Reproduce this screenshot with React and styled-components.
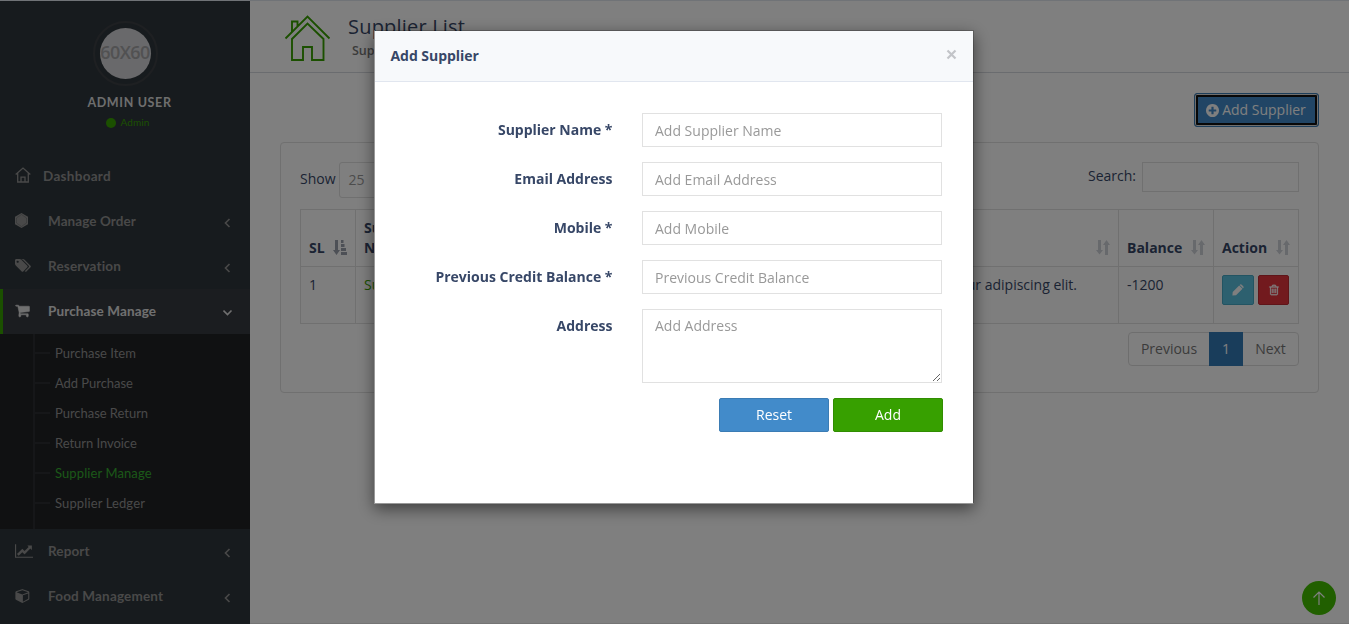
import React from 'react';
import styled, { createGlobalStyle } from 'styled-components';

const Global = createGlobalStyle`
  * { box-sizing: border-box; }
  html, body { margin: 0; height: 624px; overflow: hidden; }
  body { font: 14px/20px "Open Sans", sans-serif; color: #374767; background: #fff; }
  button, input, textarea { font: inherit; }
`;

const Page = styled.div`display: flex; height: 624px; border-top: 1px solid #e1e6ef; border-bottom: 1px solid #e8e8e8;`;
const Sidebar = styled.aside`width: 250px; flex: none; background: #2f373c; font-family: Lato, sans-serif; overflow: hidden; margin-bottom: -1px;`;
const UserPanel = styled.div`height: 153px; padding-top: 20px; display: flex; flex-direction: column; align-items: center;`;
const Avatar = styled.div`
  width: 65px; height: 65px; border: 2px solid #3d4045; border-radius: 50%; padding: 5px;
`;
const AvatarFace = styled.div`
  width: 51px; height: 51px; border-radius: 50%; background: #d2d2d6; color: #a3a3a5; overflow: hidden; padding-bottom: 3px;
  display: flex; align-items: center; justify-content: center; font: 600 18px "Open Sans", sans-serif; letter-spacing: -.6px; white-space: nowrap;
`;
const UserName = styled.div`margin: 7px 0 0 9px; line-height: 20px; font-weight: 700; font-size: 12.5px; letter-spacing: .65px; color: #dcdcdc;`;
const UserRole = styled.div`display: flex; align-items: center; gap: 5px; margin-left: 5px; line-height: 19px; font-size: 10px; color: #37a000; letter-spacing: .1px;`;
const Dot = styled.i`width: 10px; height: 10px; border-radius: 50%; background: #37a000;`;

const MenuRow = styled.a`
  height: 45px; display: flex; align-items: center; padding: 0 17px 2px ${p => (p.$active ? 12 : 15)}px;
  border-left: ${p => (p.$active ? '3px solid #37a000' : '0')};
  background: ${p => (p.$active ? '#373a40' : 'transparent')};
  color: ${p => (p.$active ? '#e0e0e0' : '#929292')};
  font-weight: 700; font-size: 13.5px; letter-spacing: ${p => p.$ls ?? 0.12}px;
  > svg:first-child { flex: none; margin-right: ${p => p.$gap || 15}px; }
`;
const RowLabel = styled.span`flex: 1; white-space: nowrap;`;
const SubMenu = styled.div`height: 195px; background: #202225; padding-left: 33px;`;
const SubTrack = styled.div`border-left: 2px solid #2c2f33; height: 195px; padding-top: 4px;`;
const SubItem = styled.a`
  display: flex; align-items: center; height: 30px; gap: 5px; font-size: 13px; letter-spacing: ${p => p.$ls || 0}px;
  color: ${p => (p.$active ? '#37b030' : '#929292')};
  &::before { content: ''; width: 15px; height: 2px; background: #2c2f33; }
`;

const Main = styled.main`flex: 1; min-width: 0;`;
const ContentHeader = styled.header`
  height: 72px; border-bottom: 1px solid #d5d8de; display: flex; padding: 13px 0 0 34px;
`;
const Titles = styled.div`margin: 2px 0 0 17px;`;
const Title = styled.h1`margin: 0; font-size: 20px; line-height: 22px; font-weight: 500; letter-spacing: .2px;`;
const Subtitle = styled.div`margin: 3px 0 0 4px; font-size: 12.5px; line-height: 20px; font-weight: 600; color: #777;`;
const Content = styled.section`padding: 20px 30px 0;`;
const Actions = styled.div`display: flex; justify-content: flex-end; margin-bottom: 15px;`;
const AddSupplier = styled.button`
  width: 125px; height: 34px; padding: 0 1px 0 0; display: flex; align-items: center; justify-content: center; gap: 3px;
  background: #428bca; border: 1px solid #3b7cb4; color: #fff; border-radius: 3px;
  box-shadow: inset 0 0 0 1px #ddd, inset 0 0 0 3px #101010;
`;
const Panel = styled.div`height: 251px; border: 1px solid #e0e0e0; border-radius: 4px; padding: 19px;`;
const Filters = styled.div`display: flex; justify-content: space-between; height: 47px; white-space: nowrap;`;
const Filter = styled.label`display: flex; align-items: flex-start; gap: ${p => p.$gap}px; > span { padding-top: ${p => p.$top}px; }`;
const FakeSelect = styled.div`width: 75px; height: 36px; border: 1px solid #e0e0e0; border-radius: 3px; padding: 7px 9px; color: #999;`;
const SearchInput = styled.input`width: 157px; height: 30px; border: 1px solid #e0e0e0; background: transparent;`;
const Table = styled.table`
  width: 999px; table-layout: fixed; border-collapse: collapse;
  th, td { border: 1px solid #e0e0e0; padding: 8px; text-align: left; height: 57px; }
  th { vertical-align: bottom; font-weight: 700; }
  td { vertical-align: top; background: #fdfdfd; white-space: nowrap; }
`;
const Col = styled.col`width: ${p => p.$w}px;`;
const HeadCell = styled.div`display: flex; align-items: flex-end; justify-content: space-between; > svg { margin-bottom: 3px; flex: none; }`;
const Link = styled.a`color: #37a000;`;
const Right = styled.div`text-align: right; padding-right: 33px;`;
const Buttons = styled.div`display: flex; gap: 4px;`;
const IconButton = styled.button`
  width: ${p => p.$w}px; height: 30px; padding: 0; display: flex; align-items: center; justify-content: center; color: #fff;
  background: ${p => p.$bg}; border: 1px solid ${p => p.$edge}; border-radius: 2px;
`;
const Pagination = styled.div`display: flex; width: 171px; height: 34px; margin: 8px 0 0 auto; border: 1px solid #ddd; border-radius: 4px; color: #777;`;
const PageLink = styled.a`
  width: ${p => p.$w}px; display: flex; align-items: center; justify-content: center;
  ${p => p.$on && 'background: #337ab7; color: #fff; margin: -1px 0;'}
`;
const ToTop = styled.div`
  position: fixed; left: 1302px; top: 581px; width: 34px; height: 34px; border-radius: 50%; background: #42bf00;
  display: flex; align-items: center; justify-content: center;
`;

const Backdrop = styled.div`position: fixed; inset: 0; background: rgba(0,0,0,.5); display: flex; justify-content: center; align-items: flex-start; padding: 30px 1px 0 0;`;
const Modal = styled.div`
  width: 600px; height: 474px; background: #fff; background-clip: padding-box; border: 1px solid rgba(0,0,0,.2);
  border-left-color: #999; border-bottom-color: #999; box-shadow: 0 5px 15px rgba(0,0,0,.5);
`;
const ModalHeader = styled.div`
  height: 51px; background: #f7f9fb; border-bottom: 1px solid #e1e6ef; display: flex; align-items: center; justify-content: space-between;
  padding: 0 16px 0 15.5px; font-weight: 700; letter-spacing: -.05px; > svg { margin-bottom: 3px; }
`;
const Form = styled.form`padding: 31px 31px 0 0; display: flex; flex-direction: column; gap: 15px;`;
const Field = styled.div`display: flex; justify-content: flex-end; gap: 29.5px;`;
const Label = styled.label`font-weight: 700; padding-top: 7px; white-space: nowrap;`;
const fieldCss = `
  display: block; width: 300px; border: 1px solid #e1e1e1; border-radius: 0; padding: 6px 12px; margin: 0; outline: 0; background: #fff;
  &::placeholder { color: #999; opacity: 1; }
`;
const Input = styled.input`${fieldCss} height: 34px;`;
const TextArea = styled.textarea`${fieldCss} height: 74px;`;
const FormActions = styled.div`display: flex; gap: 4px; justify-content: flex-end; margin-right: -1px;`;
const FormButton = styled.button`
  width: 110px; height: 34px; padding: 0; color: #fff; border-radius: 2px;
  background: ${p => (p.$ok ? '#37a000' : '#428bca')}; border: 1px solid ${p => (p.$ok ? '#318d01' : '#3b7cb4')};
`;

const paths = {
  tags: 'M448 448q0-53-37.5-90.5t-90.5-37.5-90.5 37.5-37.5 90.5 37.5 90.5 90.5 37.5 90.5-37.5 37.5-90.5zm1067 576q0 53-37 90l-491 492q-39 37-91 37-53 0-90-37l-715-716q-38-37-64.5-101t-26.5-117v-416q0-52 38-90t90-38h416q53 0 117 26.5t102 64.5l715 714q37 39 37 91zm384 0q0 53-37 90l-491 492q-39 37-91 37-36 0-59-14t-53-45l470-470q37-37 37-90 0-52-37-91l-715-714q-38-38-102-64.5t-117-26.5h224q53 0 117 26.5t102 64.5l715 714q37 39 37 91z',
  cart: 'M704 1536q0 52-38 90t-90 38-90-38-38-90 38-90 90-38 90 38 38 90zm896 0q0 52-38 90t-90 38-90-38-38-90 38-90 90-38 90 38 38 90zm128-1088v512q0 24-16.5 42.5t-40.5 21.5l-1044 122q13 60 13 70 0 16-24 64h920q26 0 45 19t19 45-19 45-45 19h-1024q-26 0-45-19t-19-45q0-11 8-31.5t16-36 21.5-40 15.5-29.5l-177-823h-204q-26 0-45-19t-19-45 19-45 45-19h256q16 0 28.5 6.5t19.5 15.5 13 24.5 8 26 5.5 29.5 4.5 26h1201q26 0 45 19t19 45z',
  chart: 'M2048 1536v128h-2048v-1536h128v1408h1920zm-128-1248v435q0 21-19.5 29.5t-35.5-7.5l-121-121-633 633q-10 10-23 10t-23-10l-233-233-416 416-192-192 585-585q10-10 23-10t23 10l233 233 464-464-121-121q-16-16-7.5-35.5t29.5-19.5h435q14 0 23 9t9 23z',
  cube: 'M896 1629l640-349v-636l-640 233v752zm-64-865l698-254-698-254-698 254zm832-252v768q0 35-18 65t-49 47l-704 384q-28 16-61 16t-61-16l-704-384q-31-17-49-47t-18-65v-768q0-40 23-73t61-47l704-256q22-8 44-8t44 8l704 256q38 14 61 47t23 73z',
  plus: 'M1344 960v-128q0-26-19-45t-45-19h-256v-256q0-26-19-45t-45-19h-128q-26 0-45 19t-19 45v256h-256q-26 0-45 19t-19 45v128q0 26 19 45t45 19h256v256q0 26 19 45t45 19h128q26 0 45-19t19-45v-256h256q26 0 45-19t19-45zm320-64q0 209-103 385.5t-279.5 279.5-385.5 103-385.5-103-279.5-279.5-103-385.5 103-385.5 279.5-279.5 385.5-103 385.5 103 279.5 279.5 103 385.5z',
  trash: 'M704 736v576q0 14-9 23t-23 9h-64q-14 0-23-9t-9-23v-576q0-14 9-23t23-9h64q14 0 23 9t9 23zm256 0v576q0 14-9 23t-23 9h-64q-14 0-23-9t-9-23v-576q0-14 9-23t23-9h64q14 0 23 9t9 23zm256 0v576q0 14-9 23t-23 9h-64q-14 0-23-9t-9-23v-576q0-14 9-23t23-9h64q14 0 23 9t9 23zm128 724v-948h-896v948q0 22 7 40.5t14.5 27 10.5 8.5h832q3 0 10.5-8.5t14.5-27 7-40.5zm-672-1076h448l-48-117q-7-9-17-11h-317q-10 2-17 11zm928 32v64q0 14-9 23t-23 9h-96v948q0 83-47 143.5t-113 60.5h-832q-66 0-113-58.5t-47-141.5v-952h-96q-14 0-23-9t-9-23v-64q0-14 9-23t23-9h309l70-167q15-37 54-63t79-26h320q40 0 79 26t54 63l70 167h309q14 0 23 9t9 23z',
};
const Glyph = ({ name, w = 14, h = 14, box = '0 0 1792 1792', edge = 0 }) => (
  <svg width={w} height={h} viewBox={box} fill="currentColor" stroke="currentColor" strokeWidth={edge}><path d={paths[name]} /></svg>
);
const HomeSmall = () => (
  <svg width="16" height="18" viewBox="0 0 16 18" fill="none" stroke="currentColor" strokeWidth="1.3">
    <path d="M.7 7.4 8 1l7.3 6.4M2.7 6v9h10.6V6M6 15v-4.8h4V15" />
  </svg>
);
const Hexagon = () => (
  <svg width="14" height="15" viewBox="0 0 14 15">
    <path d="M6.500 0 13 3.700v7.600L6.500 15 0 11.300V3.700z" fill="currentColor" />
    <path d="M6.500 1.500 1.500 5v5l5 3.500 5-3.500V5z" fill="none" stroke="#2f373c" strokeWidth=".4" opacity=".6" />
  </svg>
);
const Chevron = ({ down }) => (
  <svg width="10" height="14" viewBox="0 -4 10 14" fill="none" stroke="currentColor" strokeWidth="1.6">
    <path d={down ? 'M.5 2.500 4.500 6.500l4-4' : 'M6.500 1 2.500 5l4 4'} />
  </svg>
);
const HouseLogo = () => (
  <svg width="47" height="48" viewBox="0 0 47 48" fill="none" stroke="#37a000" strokeWidth="1.9">
    <path d="M1.500 24.500 23.500 2.500l22 22M8 17.500V7.500h5.500v5M8 25v21h11V33h9v13h11.500V25L23.500 9.500z" />
  </svg>
);
const SortIcon = ({ asc }) => asc ? (
  <svg width="14" height="15" viewBox="0 0 14 15" fill="#9aa0ac"><path d="M2 0h3v10h2l-3.500 5L0 10h2zM8 0h2.500v3H8zM8 4h3.500v3H8zM8 8h5v3H8zM8 12h6v3H8z" /></svg>
) : (
  <svg width="14" height="15" viewBox="0 0 14 15" fill="#cfd2d9"><path d="M2 0h3v10h2l-3.500 4.500L0 10h2zM9 15h3V5h2L10.500 0 7 5h2z" /></svg>
);
const Pencil = () => (
  <svg width="12" height="12" viewBox="0 0 12 12" fill="currentColor"><path d="M.7 8 7.200 1.500l3.300 3.300L4 11.300l-3.600.300zM7.900.8q.9-.9 1.800 0l1.500 1.500q.9.900 0 1.800l-.2.200-3.300-3.300z" /></svg>
);

const subItems = [['Purchase Item', 0], ['Add Purchase', -0.05], ['Purchase Return', -0.04], ['Return Invoice', -0.05], ['Supplier Manage', 0.1], ['Supplier Ledger', 0.12]];
const fields = [['Supplier Name *', 'Add Supplier Name'], ['Email Address', 'Add Email Address'], ['Mobile *', 'Add Mobile'], ['Previous Credit Balance *', 'Previous Credit Balance']];

export default function App() {
  return (
    <>
      <Global />
      <Page>
        <Sidebar>
          <UserPanel>
            <Avatar><AvatarFace>60X60</AvatarFace></Avatar>
            <UserName>ADMIN USER</UserName>
            <UserRole><Dot />Admin</UserRole>
          </UserPanel>
          <MenuRow $gap={12} $ls={0.3}><HomeSmall /><RowLabel>Dashboard</RowLabel></MenuRow>
          <MenuRow $gap={19} $ls={0.08}><Hexagon /><RowLabel>Manage Order</RowLabel><Chevron /></MenuRow>
          <MenuRow $gap={17} $ls={0.17}><Glyph name="tags" w={16} h={15} box="0 0 1920 1792" /><RowLabel>Reservation</RowLabel><Chevron /></MenuRow>
          <MenuRow $active $gap={18}><Glyph name="cart" w={15} h={15} edge={60} /><RowLabel>Purchase Manage</RowLabel><Chevron down /></MenuRow>
          <SubMenu><SubTrack>
            {subItems.map(([t, ls]) => <SubItem key={t} $ls={ls} $active={t === 'Supplier Manage'}>{t}</SubItem>)}
          </SubTrack></SubMenu>
          <MenuRow $gap={15}><Glyph name="chart" w={18} h={16} box="0 0 2048 1792" /><RowLabel>Report</RowLabel><Chevron /></MenuRow>
          <MenuRow $gap={18} $ls={0.17}><Glyph name="cube" w={15} h={15} box="0 0 1700 1792" /><RowLabel>Food Management</RowLabel><Chevron /></MenuRow>
        </Sidebar>
        <Main>
          <ContentHeader>
            <HouseLogo />
            <Titles><Title>Supplier List</Title><Subtitle>Supplier List</Subtitle></Titles>
          </ContentHeader>
          <Content>
            <Actions><AddSupplier><Glyph name="plus" w={13} h={13} box="128 128 1536 1536" />Add Supplier</AddSupplier></Actions>
            <Panel>
              <Filters>
                <Filter $gap={3} $top={7}><span>Show</span><FakeSelect>25</FakeSelect></Filter>
                <Filter $gap={6} $top={4}><span>Search:</span><SearchInput /></Filter>
              </Filters>
              <Table>
                <colgroup><Col $w={55} /><Col $w={95} /><col /><Col $w={95} /><Col $w={85} /></colgroup>
                <thead><tr>
                  <th><HeadCell>SL<SortIcon asc /></HeadCell></th>
                  <th><HeadCell><span>Supplier<br />Name</span><SortIcon /></HeadCell></th>
                  <th><HeadCell>Address<SortIcon /></HeadCell></th>
                  <th><HeadCell>Balance<SortIcon /></HeadCell></th>
                  <th><HeadCell>Action<SortIcon /></HeadCell></th>
                </tr></thead>
                <tbody><tr>
                  <td>1</td>
                  <td><Link>Supplier</Link></td>
                  <td><Right>Lorem ipsum dolor sit amet, consectetur adipiscing elit.</Right></td>
                  <td>-1200</td>
                  <td><Buttons>
                    <IconButton $w={32} $bg="#5bc0de" $edge="#46a8c5"><Pencil /></IconButton>
                    <IconButton $w={31} $bg="#e5343d" $edge="#bf2a32"><Glyph name="trash" w={12} h={12} edge={40} /></IconButton>
                  </Buttons></td>
                </tr></tbody>
              </Table>
              <Pagination><PageLink $w={80}>Previous</PageLink><PageLink $w={34} $on>1</PageLink><PageLink $w={55}>Next</PageLink></Pagination>
            </Panel>
          </Content>
        </Main>
      </Page>
      <ToTop><svg width="14" height="14" viewBox="0 0 14 14" fill="none" stroke="#fff" strokeWidth="1.2"><path d="M7 14V1M1.500 6.500 7 1l5.500 5.500" /></svg></ToTop>
      <Backdrop>
        <Modal>
          <ModalHeader><span>Add Supplier</span><svg width="11" height="11" viewBox="0 0 11 11" stroke="#c2c4c8" strokeWidth="2.200"><path d="M1.500 1.500l8 8M9.500 1.500l-8 8" /></svg></ModalHeader>
          <Form>
            {fields.map(([l, p]) => <Field key={l}><Label>{l}</Label><Input placeholder={p} /></Field>)}
            <Field><Label>Address</Label><TextArea placeholder="Add Address" /></Field>
            <FormActions><FormButton type="button">Reset</FormButton><FormButton type="button" $ok>Add</FormButton></FormActions>
          </Form>
        </Modal>
      </Backdrop>
    </>
  );
}
